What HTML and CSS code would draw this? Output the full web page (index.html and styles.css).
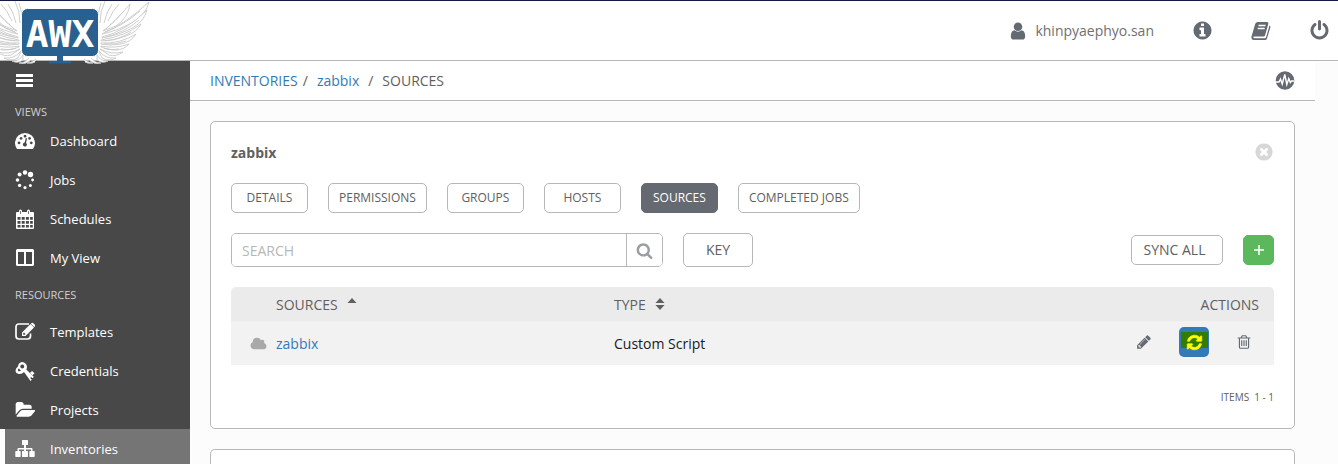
FILE: index.html
```html
<!DOCTYPE html>
<html lang="en">
<head>
<meta charset="utf-8">
<title>AWX - zabbix sources</title>
<link rel="stylesheet" href="styles.css">
</head>
<body>
<header class="topbar">
  <a class="logo" href="#" aria-label="AWX home">
    <svg width="155" height="66" viewBox="0 0 155 66">
      <defs>
        <g id="wing" fill="#fff" stroke="#c8c8c8" stroke-width=".9">
          <path d="M100 22Q100 10 105 0M97 21Q99 8 101 2M104 22Q106 12 112 3M108 20Q113 9 119 3" fill="none"/>
          <path d="M102 33Q125 23 149 1Q146 13 135 20Q120 29 102 33Z"/>
          <path d="M103 30Q114 22 130 3Q128 17 116 25Z"/>
          <path d="M102 36Q126 30 147 9Q144 20 134 26Q120 34 102 37Z"/>
          <path d="M101 39Q126 35 141 23Q137 31 126 35Q114 40 101 40Z"/>
          <path d="M101 42Q120 43 136 33Q131 41 121 43Q110 45 101 43Z"/>
          <path d="M101 45Q116 48 129 43Q124 49 115 49Q106 49 101 46Z"/>
          <path d="M100 48Q111 54 123 51Q116 56 109 54Z"/>
          <path d="M99 50Q105 58 116 57Q109 61 102 57Z"/>
          <path d="M97 54Q100 60 108 60Q102 63 97 59ZM91 57Q95 62 101 62Q95 64 90 60M84 58Q89 62 93 62Q88 63 85 61"/>
          <path d="M105 31Q124 24 140 10M106 36Q125 31 139 19M105 40Q121 38 131 31M104 43Q116 44 126 40M104 47Q112 50 119 48M106 28Q115 20 124 10" fill="none"/>
        </g>
      </defs>
      <use href="#wing"/>
      <use href="#wing" transform="translate(120 0) scale(-1 1)"/>
      <rect x="21.500" y="7.500" width="77" height="48" rx="6" fill="#286090" stroke="#fff"/>
      <path d="M57 55h6v5h8v2.500H49V60h8z" fill="#286090"/>
      <text x="60" y="46" text-anchor="middle" class="logo-text">AWX</text>
    </svg>
  </a>
  <nav class="account" aria-label="Account">
    <a class="user" href="#">
      <svg width="20" height="20" viewBox="0 0 1792 1792"><path d="M1536 1399q0 109-62.500 187t-150.500 78h-854q-88 0-150.500-78t-62.500-187q0-85 8.500-160.500t31.500-152 58.500-131 94-89 134.500-34.500q131 128 313 128t313-128q76 0 134.500 34.500t94 89 58.500 131 31.500 152 8.500 160.500zm-256-887q0 159-112.500 271.500t-271.500 112.500-271.500-112.500-112.500-271.500 112.500-271.500 271.500-112.500 271.500 112.500 112.500 271.500z"/></svg>
      <span>khinpyaephyo.san</span>
    </a>
    <a href="#" aria-label="About"><svg width="21" height="21" viewBox="0 0 1792 1792"><path d="M1152 1376v-160q0-14-9-23t-23-9h-96v-512q0-14-9-23t-23-9h-320q-14 0-23 9t-9 23v160q0 14 9 23t23 9h96v320h-96q-14 0-23 9t-9 23v160q0 14 9 23t23 9h448q14 0 23-9t9-23zm-128-896v-160q0-14-9-23t-23-9h-192q-14 0-23 9t-9 23v160q0 14 9 23t23 9h192q14 0 23-9t9-23zm640 416q0 209-103 385.500t-279.500 279.500-385.500 103-385.500-103-279.500-279.500-103-385.500 103-385.500 279.500-279.500 385.500-103 385.500 103 279.500 279.500 103 385.500z"/></svg></a>
    <a href="#" aria-label="Documentation"><svg width="20" height="20" viewBox="0 0 20 20"><path d="M6.500 1H16q1.800 0 1.300 2L14 14.500q-.4 1-1.500 1H3.200q-1 0-.9.900.1.800 1.200.8H14q.8 0 1.100-.9L18.500 4.500q1.200.5.900 1.800L16 17.500Q15.500 19 14 19H3Q.2 18.800.4 16L4 3.500Q4.600 1.200 6.500 1Z"/><path d="M7.500 4.500h7M6.700 7.500h7" stroke="#fff" stroke-width="1.300"/></svg></a>
    <a href="#" aria-label="Log out"><svg width="21" height="21" viewBox="0 0 1792 1792"><path d="M1664 896q0 156-61 298t-164 245-245 164-298 61-298-61-245-164-164-245-61-298q0-182 80.500-343t226.500-270q43-32 95.500-25t83.500 50q32 42 24.500 94.500t-49.500 84.500q-98 74-151.500 181t-53.500 228q0 104 40.500 198.500t109.500 163.500 163.500 109.500 198.500 40.500 198.500-40.500 163.500-109.500 109.500-163.500 40.500-198.500q0-121-53.500-228t-151.500-181q-42-32-49.500-84.500t24.500-94.500q31-43 84-50t95 25q146 109 226.500 270t80.500 343zm-640-768v640q0 52-38 90t-90 38-90-38-38-90v-640q0-52 38-90t90-38 90 38 38 90z"/></svg></a>
  </nav>
</header>

<div class="shell">
  <nav class="sidebar" aria-label="Main">
    <button class="menu-toggle" type="button" aria-label="Toggle menu"><svg width="20" height="16" viewBox="0 0 20 16"><path d="M1 1h17v3H1zM1 6h17v3H1zM1 11h17v3H1z"/></svg></button>
    <h2 class="group">VIEWS</h2>
    <a class="item" href="#"><svg width="20" height="20" viewBox="0 0 20 20"><path fill-rule="evenodd" d="M2 18A10 10 0 1 1 18 18zM4 10.500a1.400 1.400 0 1 0 .1 0zM6 6a1.400 1.400 0 1 0 .1 0zM10 3.800a1.400 1.400 0 1 0 .1 0zM14.500 6a1.400 1.400 0 1 0 .1 0zM16.200 10.500a1.400 1.400 0 1 0 .1 0zM10.800 7l-1.100 4.600a2 2 0 1 0 1.400.4L12 7.300z"/></svg>Dashboard</a>
    <a class="item" href="#"><svg width="20" height="20" viewBox="0 0 20 20"><circle cx="10" cy="2.500" r="2.200"/><circle cx="15.500" cy="4.500" r="2.700"/><circle cx="17.600" cy="10" r="1.400"/><circle cx="15.400" cy="15.400" r="1.500"/><circle cx="10" cy="17.600" r="1.600"/><circle cx="4.600" cy="15.400" r="1.700"/><circle cx="2.500" cy="10" r="1.800"/><circle cx="4.600" cy="4.600" r="2"/></svg>Jobs</a>
    <a class="item" href="#"><svg width="20" height="20" viewBox="0 0 20 20"><path fill-rule="evenodd" d="M1 4q0-1 1-1h2V2q0-1.500 1.500-1.500T7 2v1h5V2q0-1.500 1.500-1.500T15 2v1h3q1 0 1 1v15q0 1-1 1H2q-1 0-1-1zM2.500 8v2.800h3V8zm4.200 0v2.800h3V8zm4.200 0v2.800h3V8zm4.200 0v2.800h2.700V8zM2.500 12v2.800h3V12zm4.200 0v2.800h3V12zm4.200 0v2.800h3V12zm4.200 0v2.800h2.700V12zM2.500 16v2.500h3V16zm4.200 0v2.500h3V16zm4.200 0v2.500h3V16zm4.200 0v2.500h2.700V16z"/><path d="M5.500 2v3M13.500 2v3" stroke="#777"/></svg>Schedules</a>
    <a class="item" href="#"><svg width="20" height="20" viewBox="0 0 20 20"><path fill-rule="evenodd" d="M2.500 1h15Q19 1 19 2.500v14q0 1.500-1.500 1.500h-15Q1 18 1 16.500v-14Q1 1 2.500 1zM3 4v12h6V4zm8 0v12h6V4z"/></svg>My View</a>
    <h2 class="group group-next">RESOURCES</h2>
    <a class="item" href="#"><svg width="20" height="20" viewBox="0 0 20 20"><path d="M14 2H4Q1 2 1 5v9q0 3 3 3h8.500q3 0 3-3v-2.500" fill="none" stroke="#fff" stroke-width="1.700"/><path fill-rule="evenodd" d="M7 14v-3.500L15.500 2 19 5.500 10.500 14zm1.200-2.700v1.500h1.500l.8-.8L9 10.500zM16.300 1.200q1-1 2 0l1.500 1.500q.8.900 0 1.900l-.6.500-3.500-3.500z"/></svg>Templates</a>
    <a class="item" href="#"><svg width="20" height="20" viewBox="0 0 20 20"><path fill-rule="evenodd" d="M7 1a5 5 0 0 1 4.300 7.500l7.500 7.300-1.300 1.500-1.300-1.200-1 1 1.600 1.600-1.300 1.300L9 11A5.500 5.500 0 0 1 4 13Q.6 12.500.5 9.500.8 7 3 5.500A5 5 0 0 1 7 1zm.2 2.500A2 2 0 1 0 7.300 7.500 2 2 0 0 0 7.200 3.500zM4 7.200Q2.500 8.500 3 10q1.700 1 3-.8Q4.500 8.500 4 7.200z"/><path d="M15 12l2-2 2.500 2.300-2 2z"/></svg>Credentials</a>
    <a class="item" href="#"><svg width="20" height="20" viewBox="0 0 1920 1792"><path d="M1943 952q0 31-31 66l-336 396q-43 51-120.500 86.500t-143.500 35.500h-1088q-34 0-60.500-13t-26.500-43q0-31 31-66l336-396q43-51 120.500-86.500t143.500-35.500h1088q34 0 60.500 13t26.500 43zm-343-344v160h-832q-94 0-197 47.500t-164 119.500l-337 396-5 6q0-4-.5-12.500t-.5-12.500v-960q0-92 66-158t158-66h320q92 0 158 66t66 158v32h544q92 0 158 66t66 158z"/></svg>Projects</a>
    <a class="item current" href="#" aria-current="page"><svg width="20" height="20" viewBox="0 0 20 20"><path d="M7.500 1h5q.5 0 .5.500v4q0 .5-.5.500H11v3h5.500q1 0 1 1v2h1.500q.7 0 .7.700v4.600q0 .7-.7.700h-4q-.7 0-.7-.7v-4.600q0-.7.700-.7h1.100v-1.500H11V12h1.300q.7 0 .7.700v4.600q0 .7-.7.700H7.700q-.7 0-.7-.7v-4.600q0-.7.700-.7H9v-1.500H3.900V12H5q.7 0 .7.700v4.600q0 .7-.7.700H1q-.7 0-.7-.7v-4.600Q.300 12 1 12h1.500v-2q0-1 1-1H9V6H7.500Q7 6 7 5.500v-4q0-.5.500-.5z"/></svg>Inventories</a>
  </nav>

  <main class="content">
    <div class="crumbs">
      <nav class="trail" aria-label="Breadcrumb"><a href="#">INVENTORIES</a><span class="slash slash-first">/</span><a href="#">zabbix</a><span class="slash">/</span><span>SOURCES</span></nav>
      <button class="bare" type="button" aria-label="Activity stream"><svg width="20" height="20" viewBox="0 0 20 20"><circle cx="10" cy="9.500" r="9.300" fill="#646972"/><path d="M1 11h3l1.500-3 1.700 5L9.800 3.500l2 10 2-6 1.500 4 1.200-1.500H19" fill="none" stroke="#fff" stroke-width="1.400"/></svg></button>
    </div>

    <section class="panel">
      <div class="panel-head">
        <h1>zabbix</h1>
        <button class="bare close" type="button" aria-label="Close"><svg width="20" height="20" viewBox="0 0 1792 1792"><path d="M1277 1122q0-26-19-45l-181-181 181-181q19-19 19-45 0-27-19-46l-90-90q-19-19-46-19-26 0-45 19l-181 181-181-181q-19-19-45-19-27 0-46 19l-90 90q-19 19-19 46 0 26 19 45l181 181-181 181q-19 19-19 45 0 27 19 46l90 90q19 19 46 19 26 0 45-19l181-181 181 181q19 19 45 19 27 0 46-19l90-90q19-19 19-46zm387-226q0 209-103 385.500t-279.500 279.500-385.500 103-385.500-103-279.500-279.500-103-385.500 103-385.500 279.500-279.500 385.500-103 385.500 103 279.500 279.500 103 385.500z"/></svg></button>
      </div>
      <div class="tabs">
        <button class="tab" type="button">DETAILS</button>
        <button class="tab" type="button">PERMISSIONS</button>
        <button class="tab" type="button">GROUPS</button>
        <button class="tab" type="button">HOSTS</button>
        <button class="tab active" type="button">SOURCES</button>
        <button class="tab" type="button">COMPLETED JOBS</button>
      </div>
      <div class="toolbar">
        <form class="search">
          <input type="text" placeholder="SEARCH" aria-label="Search">
          <button type="button" aria-label="Search"><svg width="17" height="17" viewBox="0 0 1792 1792"><path d="M1216 832q0-185-131.500-316.500t-316.500-131.500-316.500 131.500-131.500 316.500 131.500 316.500 316.500 131.500 316.500-131.500 131.500-316.500zm512 832q0 52-38 90t-90 38q-54 0-90-38l-343-342q-179 124-399 124-143 0-273.500-55.500t-225-150-150-225-55.500-273.500 55.500-273.500 150-225 225-150 273.500-55.500 273.500 55.500 225 150 150 225 55.500 273.500q0 220-124 399l343 343q37 37 37 90z"/></svg></button>
        </form>
        <button class="btn key" type="button">KEY</button>
        <button class="btn sync-all" type="button">SYNC ALL</button>
        <button class="btn add" type="button" aria-label="Add source"><svg width="12" height="12" viewBox="0 0 12 12"><path d="M6 1v10M1 6h10" stroke="#fff" stroke-width="1.500"/></svg></button>
      </div>
      <table class="sources">
        <thead>
          <tr>
            <th class="status"></th>
            <th class="name">SOURCES<svg class="sort" width="10" height="14" viewBox="0 0 10 14"><path d="M.5 6L5 1l4.500 5z"/></svg></th>
            <th>TYPE<svg class="sort" width="10" height="14" viewBox="0 0 10 14"><path d="M.5 6L5 1l4.500 5zM.5 8L5 13l4.500-5z"/></svg></th>
            <th class="actions">ACTIONS</th>
          </tr>
        </thead>
        <tbody>
          <tr>
            <td class="status"><svg width="17" height="16" viewBox="0 0 2048 1792"><path d="M1984 1152q0 159-112.500 271.500t-271.500 112.500h-1088q-185 0-316.500-131.500t-131.500-316.500q0-132 71-241.500t187-163.500q-2-28-2-43 0-212 150-362t362-150q158 0 286.500 88t187.500 230q70-62 166-62 106 0 181 75t75 181q0 75-41 138 129 30 213 134.500t84 239.500z"/></svg></td>
            <td class="name"><a href="#">zabbix</a></td>
            <td>Custom Script</td>
            <td class="row-actions"><div class="row-buttons">
              <button class="act" type="button" aria-label="Edit"><svg width="16" height="16" viewBox="0 0 1792 1792"><path d="M491 1536l91-91-235-235-91 91v107h128v128h107zm523-928q0-22-22-22-10 0-17 7l-542 542q-7 7-7 17 0 22 22 22 10 0 17-7l542-542q7-7 7-17zm-54-192l416 416-832 832h-416v-416zm683 96q0 53-37 90l-166 166-416-416 166-165q36-38 90-38 53 0 91 38l235 234q37 39 37 91z"/></svg></button>
              <button class="act sync" type="button" aria-label="Sync"><span class="mark"><svg width="17" height="17" viewBox="0 0 1792 1792"><path stroke="#ff0" stroke-width="70" d="M1639 1056q0 5-1 7-64 268-268 434.500t-478 166.500q-146 0-282.500-55t-243.500-157l-129 129q-19 19-45 19t-45-19-19-45v-448q0-26 19-45t45-19h448q26 0 45 19t19 45-19 45l-137 137q71 66 161 102t187 36q134 0 250-65t186-179q11-17 53-117 8-23 30-23h192q13 0 22.500 9.500t9.500 22.500zm25-800v448q0 26-19 45t-45 19h-448q-26 0-45-19t-19-45 19-45l138-138q-148-137-349-137-134 0-250 65t-186 179q-11 17-53 117-8 23-30 23h-199q-13 0-22.500-9.500t-9.500-22.500v-7q65-268 270-434.500t480-166.500q146 0 284 55.500t245 156.500l130-129q19-19 45-19t45 19 19 45z"/></svg></span></button>
              <button class="act" type="button" aria-label="Delete"><svg width="16" height="16" viewBox="0 0 1792 1792"><path d="M704 736v576q0 14-9 23t-23 9h-64q-14 0-23-9t-9-23v-576q0-14 9-23t23-9h64q14 0 23 9t9 23zm256 0v576q0 14-9 23t-23 9h-64q-14 0-23-9t-9-23v-576q0-14 9-23t23-9h64q14 0 23 9t9 23zm256 0v576q0 14-9 23t-23 9h-64q-14 0-23-9t-9-23v-576q0-14 9-23t23-9h64q14 0 23 9t9 23zm128 724v-948h-896v948q0 22 7 40.500t14.500 27 10.500 8.500h832q3 0 10.500-8.500t14.500-27 7-40.500zm-672-1076h448l-48-117q-7-9-17-11h-317q-10 2-17 11zm928 32v64q0 14-9 23t-23 9h-96v948q0 83-47 143.500t-113 60.500h-832q-66 0-113-58.500t-47-141.500v-952h-96q-14 0-23-9t-9-23v-64q0-14 9-23t23-9h309l70-167q15-37 54-63t79-26h320q40 0 79 26t54 63l70 167h309q14 0 23 9t9 23z"/></svg></button>
            </div></td>
          </tr>
        </tbody>
      </table>
      <div class="pager"><span>ITEMS</span><span>1 - 1</span></div>
    </section>

    <section class="panel panel-next" aria-label="Inventories list"></section>
  </main>
</div>
</body>
</html>
```

FILE: styles.css
```css
* {
  box-sizing: border-box;
}

html,
body {
  height: 100%;
}

body {
  margin: 0;
  display: flex;
  flex-direction: column;
  background: #fcfcfc;
  color: #606060;
  font: 14px/20px "Open Sans", "Noto Sans", sans-serif;
}

a {
  color: #337ab7;
  text-decoration: none;
}

button,
input {
  font: inherit;
  color: inherit;
  padding: 0;
  margin: 0;
}

svg {
  display: block;
  fill: currentColor;
}

.bare {
  border: 0;
  background: none;
}

/* Top bar */
.topbar {
  position: relative;
  flex: none;
  display: flex;
  justify-content: flex-end;
  align-items: center;
  height: 61px;
  background: #fff;
  border-top: 1px solid #0f1b42;
  border-bottom: 1px solid #b7b7b7;
}

.logo {
  position: absolute;
  top: 0;
  left: 0;
  z-index: 1;
}

.logo-text {
  fill: #fff;
  font: bold 38px "DejaVu Sans Mono", monospace;
}

.account {
  display: flex;
  align-items: center;
  gap: 38px;
  padding-right: 8px;
}

.account a {
  color: #646972;
}

.account .user {
  display: flex;
  align-items: center;
  gap: 7px;
}

.user span {
  color: #707070;
}

/* Sidebar */
.shell {
  flex: 1;
  display: flex;
  min-height: 0;
}

.sidebar {
  flex: none;
  width: 190px;
  background: #484848;
  color: #fff;
  font-size: 13px;
  overflow: hidden;
}

.menu-toggle {
  display: flex;
  align-items: center;
  width: 100%;
  height: 39px;
  padding-left: 15px;
  border: 0;
  background: none;
}

.group {
  margin: 0;
  padding: 2px 15px 0;
  color: #d0d0d0;
  font-size: 11px;
  font-weight: 400;
  line-height: 19px;
}

.group-next {
  padding: 8px 15px;
}

.item {
  display: flex;
  align-items: center;
  gap: 15px;
  height: 39px;
  padding: 0 15px;
  color: #fff;
}

.item.current {
  padding-left: 10px;
  border-left: 5px solid #fff;
  background: #757575;
}

/* Content */
.content {
  flex: 1;
  display: flex;
  flex-direction: column;
  min-width: 0;
  padding-right: 23px;
}

.crumbs {
  display: flex;
  justify-content: space-between;
  align-items: center;
  height: 40px;
  padding: 0 20px;
  background: #fff;
  border-bottom: 1px solid #b7b7b7;
}

.trail {
  display: flex;
}

.slash {
  padding: 0 9px;
}

.slash-first {
  padding-left: 5px;
}

.panel {
  margin: 20px 20px 0;
  padding: 20px;
  background: #fff;
  border: 1px solid #b7b7b7;
  border-radius: 5px;
}

.panel-next {
  flex: 1;
  padding: 0;
  border-bottom: 0;
  border-radius: 5px 5px 0 0;
}

.panel-head {
  display: flex;
  justify-content: space-between;
  align-items: flex-start;
}

.panel-head h1 {
  margin: 0;
  font-size: 14px;
  line-height: 21px;
}

.close {
  color: #d7d7d7;
}

.tabs {
  display: flex;
  gap: 20px;
  margin-top: 20px;
}

.tab {
  min-width: 77px;
  height: 30px;
  padding: 0 10px;
  border: 1px solid #b7b7b7;
  border-radius: 5px;
  background: #fff;
  font-size: 12px;
}

.tab.active {
  border-color: #646972;
  background: #646972;
  color: #fff;
}

.toolbar {
  display: flex;
  align-items: center;
  gap: 20px;
  margin-top: 20px;
}

.search {
  display: flex;
  flex: 0 1 432px;
  height: 34px;
  border: 1px solid #b7b7b7;
  border-radius: 5px;
  overflow: hidden;
}

.search input {
  flex: 1;
  min-width: 0;
  padding: 2px 10px 0;
  border: 0;
  outline: 0;
}

.search input::placeholder {
  color: #b7b7b7;
  opacity: 1;
}

.search button {
  display: grid;
  place-items: center;
  width: 36px;
  border: 0;
  border-left: 1px solid #b7b7b7;
  background: #fff;
  color: #9a9da3;
}

.btn {
  height: 30px;
  border: 1px solid #b7b7b7;
  border-radius: 5px;
  background: #fff;
}

.key {
  width: 70px;
  height: 34px;
}

.sync-all {
  width: 92px;
  margin-left: auto;
  padding-right: 5px;
}

.add {
  display: grid;
  place-items: center;
  width: 31px;
  border-color: #5cb85c;
  background: #5cb85c;
}

/* Table */
.sources {
  width: 100%;
  margin-top: 20px;
  border-collapse: collapse;
  table-layout: fixed;
}

.sources th {
  height: 34px;
  padding: 2px 0 0;
  background: #ebebeb;
  font-weight: 400;
  text-align: left;
}

.sources th:first-child {
  border-top-left-radius: 5px;
}

.sources th:last-child {
  border-top-right-radius: 5px;
}

.sources td {
  height: 44px;
  padding: 2px 0 0;
  background: #f2f2f2;
  color: #161b1f;
}

.sources .status {
  width: 45px;
  padding-left: 19px;
}

.sources td.status {
  color: #a9a9a9;
}

.sources td.row-actions {
  padding: 0 0 2px;
}

.name {
  width: 338px;
}

.sort {
  display: inline-block;
  margin-left: 9px;
  vertical-align: -1px;
}

.sources .actions {
  padding-right: 15px;
  text-align: right;
}

.row-buttons {
  display: flex;
  justify-content: flex-end;
  gap: 20px;
  padding-right: 15px;
}

.act {
  display: grid;
  place-items: center;
  width: 30px;
  height: 30px;
  border: 0;
  border-radius: 5px;
  background: none;
  color: #646972;
}

.sync {
  align-items: start;
  padding-top: 5px;
  background: #337ab7;
  color: #ff0;
}

.mark {
  display: flex;
  justify-content: center;
  width: 27px;
  height: 16px;
  padding-top: 2px;
  background: #347c00;
}

.mark svg {
  flex: none;
}

.pager {
  display: flex;
  justify-content: flex-end;
  gap: 5px;
  margin-top: 22px;
  padding-bottom: 1px;
  font-size: 10px;
}
```
